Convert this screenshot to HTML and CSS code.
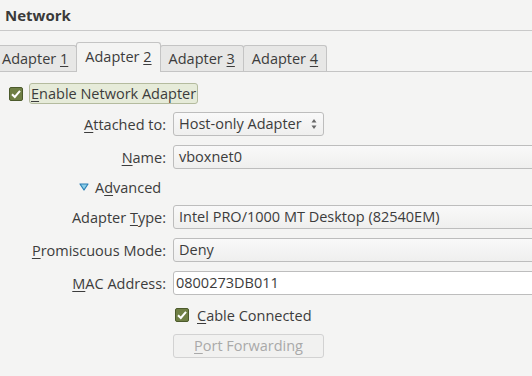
FILE: index.html
```html
<!DOCTYPE html>
<html>
<head>
<meta charset="utf-8">
<link rel="stylesheet" href="styles.css">
</head>
<body>
<div class="page">
  <div class="title">Network</div>
  <div class="tabs">
    <div class="tab">Adapter <u>1</u></div>
    <div class="tab active">Adapter <u>2</u></div>
    <div class="tab">Adapter <u>3</u></div>
    <div class="tab">Adapter <u>4</u></div>
  </div>
  <div class="content">
    <div class="enable-row">
      <span class="check"><svg viewBox="0 0 14 14" width="14" height="14"><rect x="0.5" y="0.5" width="13" height="13" rx="1.5" fill="#6f7f45" stroke="#4c5a2c"/><path d="M3 7.2 L5.8 10 L11 3.8" fill="none" stroke="#ffffff" stroke-width="2"/></svg></span>
      <span class="focus-label"><u>E</u>nable Network Adapter</span>
    </div>
    <div class="form first">
      <div class="label"><u>A</u>ttached to:</div>
      <div class="combo short">Host-only Adapter<span class="spin"><svg viewBox="0 0 8 14" width="8" height="14"><path d="M4 2 L6.5 5.5 L1.5 5.5 Z" fill="#666666"/><path d="M4 12 L6.5 8.5 L1.5 8.5 Z" fill="#666666"/></svg></span></div>
      <div class="label"><u>N</u>ame:</div>
      <div class="combo wide">vboxnet0</div>
    </div>
    <div class="advanced"><svg class="tri" viewBox="0 0 10 8" width="10" height="8"><path d="M1 1 L9 1 L5 7 Z" fill="#8ccfe8" stroke="#2a7fb5" stroke-width="1.2" stroke-linejoin="round"/></svg><span>A<u>d</u>vanced</span></div>
    <div class="form">
      <div class="label">Adapter <u>T</u>ype:</div>
      <div class="combo wide">Intel PRO/1000 MT Desktop (82540EM)</div>
      <div class="label"><u>P</u>romiscuous Mode:</div>
      <div class="combo wide">Deny</div>
      <div class="label"><u>M</u>AC Address:</div>
      <div class="entry wide">0800273DB011</div>
      <div></div>
      <div class="cable"><span class="check"><svg viewBox="0 0 14 14" width="14" height="14"><rect x="0.5" y="0.5" width="13" height="13" rx="1.5" fill="#6f7f45" stroke="#4c5a2c"/><path d="M3 7.2 L5.8 10 L11 3.8" fill="none" stroke="#ffffff" stroke-width="2"/></svg></span><span><u>C</u>able Connected</span></div>
      <div></div>
      <div class="button"><u>P</u>ort Forwarding</div>
    </div>
  </div>
</div>
</body>
</html>
```
FILE: styles.css
```css
html, body {
  margin: 0;
  padding: 0;
  background: #f4f4f3;
  overflow: hidden;
}
body {
  width: 532px;
  height: 376px;
  font-family: "Open Sans", "DejaVu Sans", sans-serif;
  font-size: 14.5px;
  color: #3c3c3c;
}
u {
  text-decoration: underline;
  text-underline-offset: 2px;
  text-decoration-thickness: 1px;
}
.page {
  display: flex;
  flex-direction: column;
  width: 532px;
  overflow: hidden;
}
.title {
  font-weight: bold;
  font-size: 15px;
  color: #3a3a3a;
  height: 31px;
  line-height: 30px;
  padding-left: 5px;
  border-bottom: 1px solid #c9c9c9;
  box-sizing: border-box;
}
.tabs {
  display: flex;
  align-items: flex-end;
  margin-top: 12px;
  margin-left: -7px;
  height: 29px;
  border-bottom: 1px solid #c4c4c4;
  box-sizing: border-box;
}
.tab {
  height: 26px;
  line-height: 25px;
  padding: 0 8px;
  background: #e7e7e6;
  border: 1px solid #c4c4c4;
  border-bottom: none;
  border-radius: 3px 3px 0 0;
  margin-right: -1px;
  box-sizing: border-box;
  color: #3c3c3c;
  white-space: nowrap;
}
.tab.active {
  height: 30px;
  line-height: 27px;
  margin-bottom: -1px;
  background: #f4f4f3;
  position: relative;
  z-index: 1;
}
.content {
  display: flex;
  flex-direction: column;
}
.enable-row {
  display: flex;
  align-items: center;
  margin-top: 11px;
  padding-left: 9px;
  height: 21px;
}
.check {
  display: flex;
  width: 14px;
  height: 14px;
}
.focus-label {
  margin-left: 6px;
  padding: 0 1px 0 1px;
  height: 21px;
  line-height: 20px;
  background: #e6ebd9;
  border: 1px solid #b4bb9e;
  border-radius: 3px;
  box-sizing: border-box;
}
.form {
  display: grid;
  grid-template-columns: 166px auto;
  column-gap: 7px;
  row-gap: 9px;
  align-items: center;
}
.form.first {
  margin-top: 8px;
}
.label {
  text-align: right;
  white-space: nowrap;
}
.combo, .entry, .button {
  height: 24px;
  line-height: 22px;
  border: 1px solid #bdbdbd;
  border-radius: 3px;
  box-sizing: border-box;
  padding-left: 5px;
  white-space: nowrap;
}
.combo {
  background: linear-gradient(#f9f9f9, #efefee);
  display: flex;
  align-items: center;
}
.combo.short {
  width: 151px;
  justify-content: space-between;
  padding-right: 5px;
}
.wide {
  width: 362px;
}
.entry {
  background: #ffffff;
  padding-left: 2px;
}
.spin {
  display: flex;
}
.advanced {
  display: flex;
  align-items: center;
  height: 20px;
  margin: 8px 0 8px 79px;
}
.tri {
  margin-right: 6px;
}
.cable {
  display: flex;
  align-items: center;
  height: 22px;
  padding-left: 2px;
}
.cable .check {
  margin-right: 8px;
}
.button {
  width: 151px;
  text-align: center;
  padding-left: 0;
  color: #a9a9a9;
  background: #f1f1f0;
  border-color: #d2d2d2;
  margin-top: -1px;
}
```
